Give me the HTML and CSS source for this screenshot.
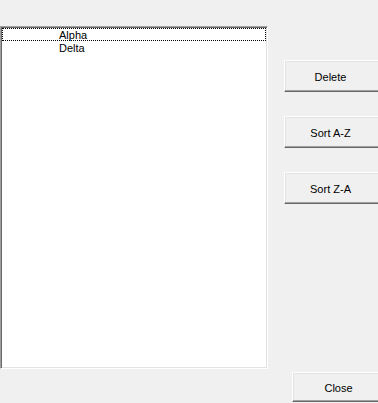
FILE: index.html
```
<!DOCTYPE html>
<html lang="en">
<head>
    <meta charset="UTF-8">
    <meta name="viewport" content="width=device-width, initial-scale=1.0">
    <title>List Editor</title>
    <link rel="stylesheet" href="styles.css">
</head>
<body>
    <div class="window">
        <div class="main">
            <div class="listbox">
                <div class="item focused">Alpha</div>
                <div class="item">Delta</div>
            </div>
            <div class="side">
                <button class="btn">Delete</button>
                <button class="btn">Sort A-Z</button>
                <button class="btn">Sort Z-A</button>
            </div>
        </div>
        <div class="footer">
            <button class="btn close-btn">Close</button>
        </div>
    </div>
</body>
</html>
```
FILE: styles.css
```
body {
    margin: 0;
    background-color: #f0f0f0;
    font-family: "Liberation Sans", Arial, sans-serif;
    font-size: 11px;
    color: #000;
    overflow: hidden;
}
.window {
    width: 378px;
    height: 403px;
    padding-top: 26px;
    box-sizing: border-box;
    overflow: hidden;
}
.main {
    display: flex;
}
.listbox {
    flex: none;
    width: 268px;
    height: 343px;
    box-sizing: border-box;
    background-color: #fff;
    border: 1px solid;
    border-color: #a0a0a0 #fff #fff #a0a0a0;
    box-shadow: inset 1px 1px #696969, inset -1px -1px #e3e3e3;
    padding: 1px;
}
.item {
    height: 13px;
    line-height: 12px;
    padding-top: 1px;
    padding-left: 57px;
    box-sizing: border-box;
}
.focused {
    outline: 1px dotted #000;
    outline-offset: -1px;
}
.side {
    flex: none;
    display: flex;
    flex-direction: column;
    gap: 24px;
    margin-left: 16px;
    padding-top: 34px;
}
.btn {
    width: 100px;
    height: 32px;
    padding: 1px 7px 0 0;
    background-color: #f0f0f0;
    font-family: inherit;
    font-size: 11px;
    color: #000;
    border: 1px solid;
    border-color: #fff #696969 #696969 #fff;
    box-shadow: inset -1px -1px #a0a0a0, inset 1px 1px #e3e3e3;
}
.footer {
    padding-left: 292px;
    margin-top: 3px;
    white-space: nowrap;
}
.close-btn {
    height: 30px;
}
```
